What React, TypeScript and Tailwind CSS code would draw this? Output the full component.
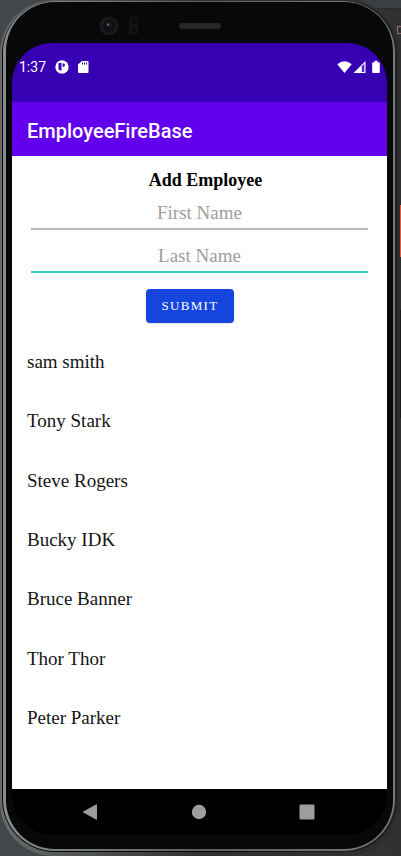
import React from "react";

const employees = [
  "sam smith",
  "Tony Stark",
  "Steve Rogers",
  "Bucky IDK",
  "Bruce Banner",
  "Thor Thor",
  "Peter Parker",
];

const serif = "font-['Liberation_Serif',serif]";

function StatusBar() {
  return (
    <div className="flex h-[59px] shrink-0 items-start justify-between bg-[#3700b3] pr-[7px] pl-[7px] pt-[14px] text-white">
      <div className="flex h-5 items-center">
        <span className="w-[36px] text-[14px] leading-5">1:37</span>
        <svg className="h-[14px] w-[14px]" viewBox="0 0 14 14" aria-hidden="true">
          <circle cx="7" cy="7" r="6.7" fill="currentColor" />
          <path d="M3.500 3.500q1.500-1 3-.5v7.500H5.500q-1 0-2-1.500z" fill="#3700b3" />
          <path d="M7.600 3.200q2.400 0 2.400 1.900T7.600 7z" fill="#3700b3" />
        </svg>
        <svg className="ml-[9px] h-[14px] w-[11px]" viewBox="0 0 11 14" aria-hidden="true">
          <path d="M4 1h5.500q1 0 1 1v10q0 1-1 1h-8.500q-1 0-1-1V4.500z" fill="currentColor" />
          <path d="M4 2.500h1v2H4zM6 2.500h1v2H6zM8 2.500h1v2H8z" fill="#3700b3" />
        </svg>
      </div>
      <div className="flex h-5 items-center">
        <svg className="h-[14px] w-[15px]" viewBox="0 0 15 14" aria-hidden="true">
          <path d="M.3 4.200Q7.500-1.600 14.700 4.200L7.500 13z" fill="currentColor" />
        </svg>
        <svg className="ml-px h-[14px] w-[13px]" viewBox="0 0 13 14" aria-hidden="true">
          <path d="M.5 13L12.500 1v12z" fill="currentColor" />
          <path d="M8.800 6.300l2.500-2.600V12H8.800z" fill="#3700b3" opacity=".85" />
        </svg>
        <svg className="ml-[6px] h-[14px] w-2" viewBox="0 0 8 14" aria-hidden="true">
          <path d="M2.500.8h3v1.400H7q.8 0 .8.800v9.200q0 .8-.8.8H1q-.8 0-.8-.8V3q0-.8.800-.8h1.500z" fill="currentColor" />
        </svg>
      </div>
    </div>
  );
}

function NavBar() {
  return (
    <nav className="flex h-[46px] shrink-0 items-center justify-between bg-black pr-[72px] pl-[70px] text-[#9d9d9d]">
      <button type="button" aria-label="Back" className="block">
        <svg className="h-4 w-4" viewBox="0 0 16 16">
          <path d="M14.500.3q.5-.2.5.4v14.600q0 .6-.5.400L1.300 8.400q-.6-.4 0-.8z" fill="currentColor" />
        </svg>
      </button>
      <button type="button" aria-label="Home" className="block">
        <svg className="h-4 w-4" viewBox="0 0 16 16">
          <circle cx="8" cy="8" r="7.200" fill="currentColor" />
        </svg>
      </button>
      <button type="button" aria-label="Recent apps" className="block">
        <svg className="h-4 w-4" viewBox="0 0 16 16">
          <rect x=".5" y=".5" width="15" height="15" rx="1" fill="currentColor" />
        </svg>
      </button>
    </nav>
  );
}

function Field({ label, active }: { label: string; active?: boolean }) {
  return (
    <input
      type="text"
      aria-label={label}
      placeholder={label}
      className={
        "block w-full border-b-2 bg-transparent text-center text-[19px] text-black outline-none placeholder:text-[#9e9e9e] " +
        (active ? "mt-[11px] h-8 border-[#34d2c3]" : "h-8 border-[#b8b8b8]")
      }
    />
  );
}

function EmployeeForm() {
  return (
    <form
      className={"flex shrink-0 flex-col items-center px-[19px] pt-[14px] " + serif}
      onSubmit={(e) => e.preventDefault()}
    >
      <h2 className="ml-3 text-[18px] leading-5 font-bold text-black">Add Employee</h2>
      <div className="mt-2 w-full">
        <Field label="First Name" />
        <Field label="Last Name" active />
      </div>
      <button
        type="submit"
        className="mt-4 mr-[19px] h-[34px] w-[88px] rounded-[4px] bg-[#1545dd] text-[13px] tracking-widest text-white shadow-sm"
      >
        SUBMIT
      </button>
    </form>
  );
}

function Camera() {
  return (
    <svg className="ml-[88px] h-6 w-[44px]" viewBox="0 0 44 24" aria-hidden="true">
      <circle cx="9" cy="12" r="9.500" fill="#19191a" />
      <circle cx="9" cy="12" r="6" fill="#0d0e11" />
      <circle cx="9" cy="11" r="2.500" fill="#1d2027" />
      <circle cx="8" cy="10.500" r="1" fill="#6d737d" />
      <rect x="29" y="2" width="9" height="19" rx="3" fill="#121213" />
      <circle cx="33.500" cy="7" r="2.500" fill="#0c0c0d" />
      <circle cx="33.500" cy="16" r="2.500" fill="#0c0c0d" />
    </svg>
  );
}

export default function App() {
  return (
    <div className="relative flex min-h-screen flex-col overflow-hidden bg-linear-to-r from-[#45484b] to-[#303133] font-[Roboto,sans-serif]">
      <div className="absolute top-0 right-0 h-[9px] w-10 border-b border-[#292b2c] bg-[#3c3f41]" />
      <div className="absolute top-[26px] right-0 h-2 w-1 border border-r-0 border-[#a36464]" />

      <div className="relative flex grow flex-col rounded-[54px] bg-linear-to-r from-[#686d6c] via-[#303132] to-[#2c2e2f] pt-px pr-[3px] pb-[4px] pl-[2px]">
        <div className="flex grow flex-col rounded-[53px] bg-linear-to-r from-[#080808] via-[#080808] to-[#222425] pr-[3px] pb-px pl-px">
          <div className="flex grow flex-col rounded-[52px] bg-linear-to-r from-[#8a8d8e] via-[#5e5f60] to-[#777979] pt-px pr-[2px] pb-[2px] pl-[3px]">
            <div className="flex grow flex-col rounded-[49px] bg-[#08080a] pr-[6px] pb-[14px] pl-[6px]">
              <div className="flex h-[41px] shrink-0 items-center">
                <div className="flex flex-1 items-center pt-[7px]">
                  <Camera />
                </div>
                <div className="mt-[7px] h-[6px] w-[42px] rounded-full bg-[#272728]" />
                <div className="flex-1" />
              </div>

              <div className="flex grow flex-col overflow-hidden rounded-[40px]">
                <StatusBar />
                <header className="flex h-[54px] shrink-0 items-center bg-[#6200ee] px-[15px]">
                  <h1 className="pt-[3px] text-[20px] leading-6 font-medium text-white">EmployeeFireBase</h1>
                </header>
                <main className="flex grow flex-col bg-white pb-[41px]">
                  <EmployeeForm />
                  <ul className={"mt-[9px] flex grow flex-col px-[15px] text-[19px] leading-6 text-[#151515] " + serif}>
                    {employees.map((name) => (
                      <li key={name} className="flex flex-1 items-center">
                        {name}
                      </li>
                    ))}
                  </ul>
                </main>
                <NavBar />
              </div>
            </div>
          </div>
        </div>
      </div>

      <div className="absolute top-[205px] right-0 h-[52px] w-px bg-[#e8593a]" />
      <div className="absolute top-[310px] right-0 h-[108px] w-px bg-[#17191a]" />
    </div>
  );
}
